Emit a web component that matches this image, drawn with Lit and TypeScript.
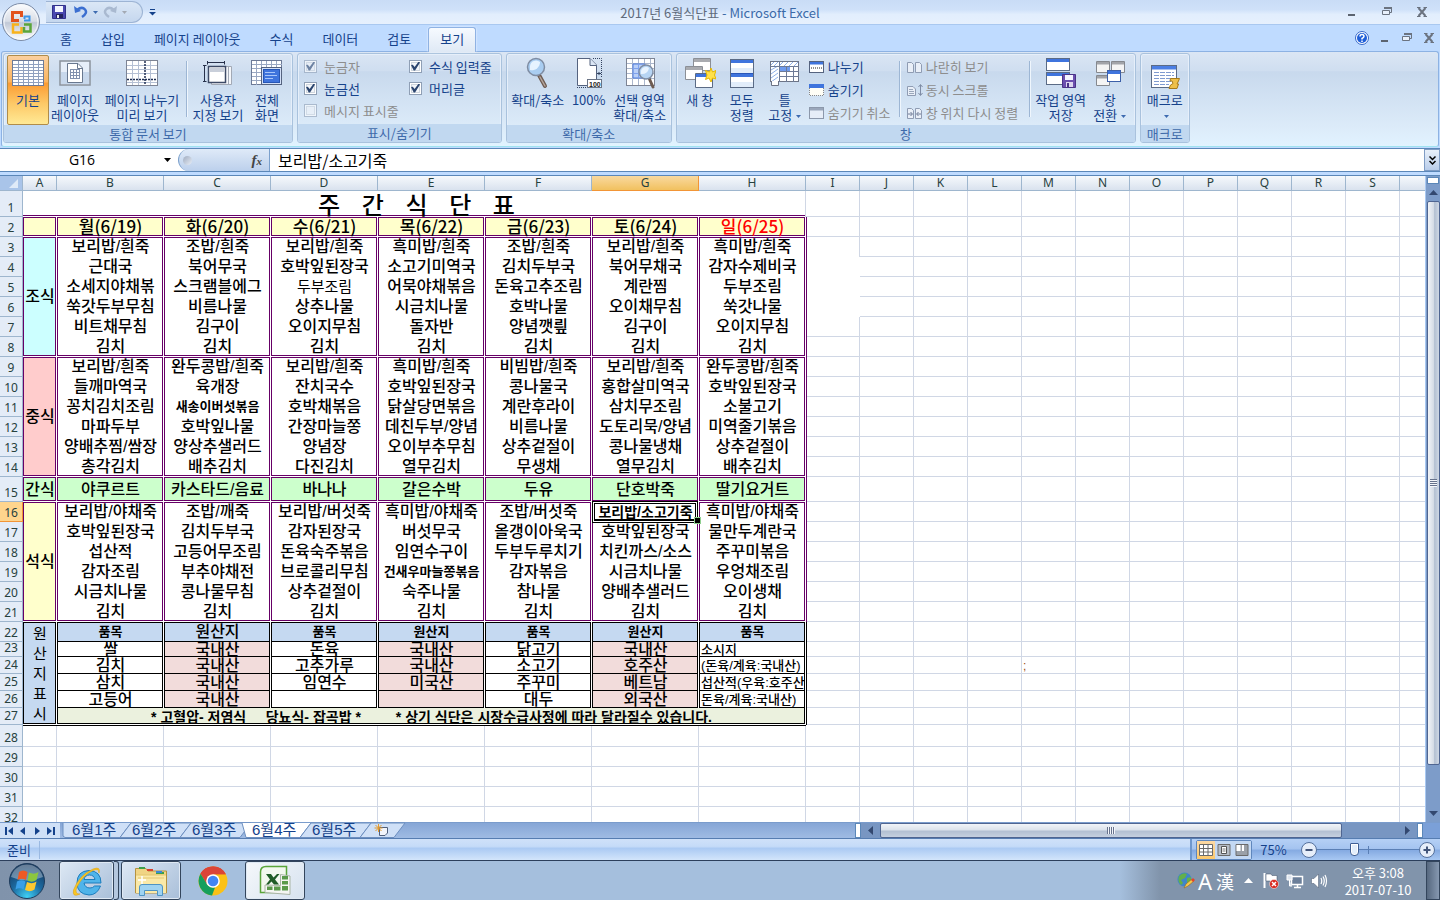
import { LitElement, html, css, nothing } from "lit";
import { customElement } from "lit/decorators.js";
import { classMap } from "lit/directives/class-map.js";

/* ---------- workbook data ---------- */

const COLS = "ABCDEFGHIJKLMNOPQRS".split("");

const BREAKFAST = [
  ["보리밥/흰죽", "조밥/흰죽", "보리밥/흰죽", "흑미밥/흰죽", "조밥/흰죽", "보리밥/흰죽", "흑미밥/흰죽"],
  ["근대국", "북어무국", "호박잎된장국", "소고기미역국", "김치두부국", "북어무채국", "감자수제비국"],
  ["소세지야채볶", "스크램블에그", "두부조림", "어묵야채볶음", "돈육고추조림", "계란찜", "두부조림"],
  ["쑥갓두부무침", "비름나물", "상추나물", "시금치나물", "호박나물", "오이채무침", "쑥갓나물"],
  ["비트채무침", "김구이", "오이지무침", "돌자반", "양념깻릪", "김구이", "오이지무침"],
  ["김치", "김치", "김치", "김치", "김치", "김치", "김치"],
];
const LUNCH = [
  ["보리밥/흰죽", "완두콩밥/흰죽", "보리밥/흰죽", "흑미밥/흰죽", "비빔밥/흰죽", "보리밥/흰죽", "완두콩밥/흰죽"],
  ["들깨마역국", "육개장", "잔치국수", "호박잎된장국", "콩나물국", "홍합살미역국", "호박잎된장국"],
  ["꽁치김치조림", "새송이버섯볶음", "호박채볶음", "닭살당면볶음", "계란후라이", "삼치무조림", "소불고기"],
  ["마파두부", "호박잎나물", "간장마늘쫑", "데친두부/양념", "비름나물", "도토리묵/양념", "미역줄기볶음"],
  ["양배추찜/쌈장", "양상추샐러드", "양념장", "오이부추무침", "상추겉절이", "콩나물냉채", "상추겉절이"],
  ["총각김치", "배추김치", "다진김치", "열무김치", "무생채", "열무김치", "배추김치"],
];
const SNACK = [["야쿠르트", "카스타드/음료", "바나나", "갈은수박", "두유", "단호박죽", "딸기요거트"]];
const DINNER = [
  ["보리밥/야채죽", "조밥/깨죽", "보리밥/버섯죽", "흑미밥/야채죽", "조밥/버섯죽", "보리밥/소고기죽", "흑미밥/야채죽"],
  ["호박잎된장국", "김치두부국", "감자된장국", "버섯무국", "올갱이아욱국", "호박잎된장국", "물만두계란국"],
  ["섭산적", "고등어무조림", "돈육숙주볶음", "임연수구이", "두부두루치기", "치킨까스/소스", "주꾸미볶음"],
  ["감자조림", "부추야채전", "브로콜리무침", "건새우마늘쫑볶음", "감자볶음", "시금치나물", "우엉채조림"],
  ["시금치나물", "콩나물무침", "상추겉절이", "숙주나물", "참나물", "양배추샐러드", "오이생채"],
  ["김치", "김치", "김치", "김치", "김치", "김치", "김치"],
];
const ORIGIN = [
  ["품목", "원산지", "품목", "원산지", "품목", "원산지", "품목"],
  ["쌀", "국내산", "돈육", "국내산", "닭고기", "국내산", "소시지"],
  ["김치", "국내산", "고추가루", "국내산", "소고기", "호주산", "(돈육/계육:국내산)"],
  ["삼치", "국내산", "임연수", "미국산", "주꾸미", "베트남", "섭산적(우육:호주산"],
  ["고등어", "국내산", "", "", "대두", "외국산", "돈육/계육:국내산)"],
];
const DAYS = ["월(6/19)", "화(6/20)", "수(6/21)", "목(6/22)", "금(6/23)", "토(6/24)", "일(6/25)"];
const SMALL = new Set(["새송이버섯볶음", "건새우마늘쫑볶음"]);

type Block = { first: number; label: string; tint: string; rows: string[][] };
const BLOCKS: Block[] = [
  { first: 3, label: "조식", tint: "cyan", rows: BREAKFAST },
  { first: 9, label: "중식", tint: "pink", rows: LUNCH },
  { first: 15, label: "간식", tint: "green", rows: SNACK },
  { first: 16, label: "석식", tint: "yellow", rows: DINNER },
];

/* ---------- icons ---------- */

const icNormal = html`<svg viewBox="0 0 32 32" width="32" height="32">
  <rect x=".5" y="3.5" width="31" height="25" fill="#fff" stroke="#6d7a96"></rect>
  <path d="M6.5 4V28M11.5 4V28M16.5 4V28M21.5 4V28M26.5 4V28M1 7.5H31M1 10.5H31M1 13.5H31M1 16.5H31M1 19.5H31M1 22.5H31M1 25.5H31" stroke="#8fa0bf" fill="none"></path></svg>`;
const icPage = html`<svg viewBox="0 0 32 32" width="32" height="32">
  <rect x="1" y="4" width="30" height="24" fill="#e6eef9" stroke="#8b929c" stroke-width="1.5"></rect>
  <path d="M2 15H30V27H2Z" fill="#c8d8ec"></path>
  <path d="M8.500 6.500H19L23.500 11V25.500H8.500Z" fill="#fff" stroke="#69788f"></path>
  <path d="M18.500 7V11.500H23" fill="none" stroke="#69788f"></path>
  <path d="M11 12.500H21M11 15.500H21M11 18.500H21M11 21.500H21M11.500 12V22M14.500 12V22M17.500 12V22M20.500 12V22" stroke="#8291ad" fill="none"></path></svg>`;
const icBreak = html`<svg viewBox="0 0 32 32" width="32" height="32">
  <rect x=".5" y="3.500" width="31" height="25" fill="#fff" stroke="#7d8494"></rect>
  <path d="M6.500 4V28M12.500 4V28M24.500 4V28M1 8.500H31M1 12.500H31M1 16.500H31M1 25.500H31" stroke="#b5c0d4" fill="none"></path>
  <path d="M1 22.500H31M19 4V28" stroke="#1f2e52" stroke-width="1.500" stroke-dasharray="2 1" fill="none"></path></svg>`;
const icCustom = html`<svg viewBox="0 0 32 32" width="32" height="32">
  <path d="M9.500 9.500H29.500V27.500H9.500Z" fill="#f4f6fa" stroke="#a2a9b5"></path>
  <path d="M26.500 10V27" stroke="#a2a9b5"></path>
  <path d="M6.500 9.500H23.500V25.500H6.500Z" fill="#fff" stroke="#3d4a66" stroke-width="1.500"></path>
  <path d="M8 11H22V15H8Z" fill="#c9cfda"></path>
  <path d="M5 5.500H23M5.500 4V7.500M22.500 4V7.500M2.500 8V25M1 8.500H4.500M1 24.500H4.500" stroke="#26304a" fill="none"></path></svg>`;
const icFull = html`<svg viewBox="0 0 32 32" width="32" height="32">
  <rect x=".5" y="3.500" width="30" height="24" fill="#fff" stroke="#6d7a96"></rect>
  <path d="M5.500 4V28M10.500 4V28M15.500 4V28M20.500 4V28M25.500 4V28M1 7.500H31M1 11.500H31M1 15.500H31M1 19.500H31M1 23.500H31" stroke="#9aa8c2" fill="none"></path>
  <rect x="10.500" y="10.500" width="20" height="17" fill="#d3e0f8" stroke="#55637f"></rect>
  <rect x="12.500" y="12.500" width="16" height="13" fill="#3f74dd" stroke="#2756b5"></rect>
  <path d="M14 15.500H24M14 18.500H26M14 21.500H22" stroke="#a9c6fa"></path></svg>`;
const icZoom = html`<svg viewBox="0 0 32 32" width="32" height="32">
  <path d="M17 18L23 29" stroke="#6e5c52" stroke-width="4" stroke-linecap="round"></path>
  <path d="M18 20L23 29" stroke="#b5a59b" stroke-width="1.500" stroke-linecap="round"></path>
  <circle cx="14" cy="10" r="8.500" fill="#a9cdf1" stroke="#7f8da3" stroke-width="1.500"></circle>
  <path d="M8 9a6 6 0 0 1 10-4a8 8 0 0 1-10 8z" fill="#e6f3ff"></path></svg>`;
const ic100 = html`<svg viewBox="0 0 32 32" width="32" height="32">
  <path d="M20 1.500H28.500V20M4 30.500H16" stroke="#33425f" stroke-dasharray="1 1" fill="none"></path>
  <path d="M4.500 1.500H17L23.500 8V28.500H4.500Z" fill="#fff" stroke="#55637f"></path>
  <path d="M17 1.500V8.500H23.500" fill="#dbe6f5" stroke="#55637f"></path>
  <path d="M24 16.500H28M26 15V18" stroke="#33425f"></path>
  <rect x="14.500" y="22.500" width="14" height="8" fill="#fff" stroke="#6a7486"></rect>
  <text x="16" y="29.500" font-size="7" font-weight="700" font-family="Liberation Sans, sans-serif" fill="#222">100</text></svg>`;
const icZoomSel = html`<svg viewBox="0 0 32 32" width="32" height="32">
  <rect x="2.500" y="1.500" width="28" height="27" fill="#fff" stroke="#7d8494"></rect>
  <path d="M8.500 2V28M14.500 2V28M20.500 2V28M26.500 2V28M3 6.500H30M3 11.500H30M3 16.500H30M3 21.500H30" stroke="#aab6cc" fill="none"></path>
  <path d="M9 7H21V21H9Z" fill="#b9cff7" stroke="#4f7ce0"></path>
  <path d="M14.500 7V21M9 11.500H21M9 16.500H21" stroke="#7fa2ee"></path>
  <path d="M25 21L29 30" stroke="#6e5c52" stroke-width="3" stroke-linecap="round"></path>
  <circle cx="22" cy="15" r="7" fill="#b7d5f4" stroke="#7f8da3" stroke-width="1.500"></circle>
  <path d="M17 14a5 5 0 0 1 8-3a7 7 0 0 1-8 6z" fill="#e9f4ff"></path></svg>`;
const icNewWin = html`<svg viewBox="0 0 32 32" width="32" height="32">
  <path d="M9.500 1.500H26.500V13.500H9.500Z" fill="#fff" stroke="#8b8f96"></path><path d="M10 2H26V5H10Z" fill="#a9abb0"></path>
  <path d="M1.500 9.500H18.500V22.500H1.500Z" fill="#fff" stroke="#8b8f96"></path><path d="M2 10H18V13H2Z" fill="#a9abb0"></path>
  <path d="M11.500 16.500H28.500V30.500H11.500Z" fill="#fff" stroke="#5b6b85"></path><path d="M12 17H28V20H12Z" fill="#3f74dd"></path>
  <path d="M27 11L28.500 15L32 13.500L30.500 18L32 22L28.500 21L27 25L25 21L21.500 22.500L23 18L21.500 13.500L25.500 15Z" fill="#ffe14a" stroke="#e6b800"></path></svg>`;
const icArrange = html`<svg viewBox="0 0 32 32" width="32" height="32">
  <rect x="4.500" y="2.500" width="23" height="28" fill="#fff" stroke="#5b6b85"></rect>
  <path d="M5 3H27V6H5ZM5 17H27V20H5Z" fill="#3f74dd"></path><path d="M5 16.500H27" stroke="#2a57b8"></path>
  <path d="M5 11H27V16H5ZM5 25H27V30H5Z" fill="#e2edfa"></path></svg>`;
const icFreeze = html`<svg viewBox="0 0 32 32" width="32" height="32">
  <rect x="1.500" y="4.500" width="28" height="20" fill="#fff" stroke="#6d7486"></rect>
  <path d="M2 8L5 5M5 9L9 5M10 9L14 5M15 9L19 5M20 9L24 5M25 9L29 5M2 13L9 9M2 17L9 12M2 21L9 16M2 25L9 20" stroke="#8fb0e8"></path>
  <path d="M1 9.500H30M10.500 4V25M10 14.500H30M10 19.500H30M17.500 9V25M24.500 9V25" stroke="#6d7a96"></path>
  <path d="M11 10H17V14H11ZM18 10H21V14H18Z" fill="#6e9bef"></path>
  <path d="M2.500 24V28.500H9.500V24" fill="#fff" stroke="#6d7486"></path></svg>`;
const icSaveWs = html`<svg viewBox="0 0 32 32" width="32" height="32">
  <rect x="1.500" y="1.500" width="23" height="12" fill="#fff" stroke="#5b6b85"></rect><path d="M2 2H24V5H2Z" fill="#3f74dd"></path>
  <rect x="1.500" y="15.500" width="23" height="12" fill="#fff" stroke="#5b6b85"></rect><path d="M2 16H24V19H2Z" fill="#3f74dd"></path>
  <path d="M17.500 17.500H30.500V30.500H17.500Z" fill="#6c4fae" stroke="#4a3388"></path>
  <path d="M20 18H28V23H20Z" fill="#f4f4ff"></path><path d="M21 25H28V30H21Z" fill="#ddd6ef"></path><path d="M22 26H24V30H22Z" fill="#4a3388"></path></svg>`;
const icSwitch = html`<svg viewBox="0 0 32 32" width="32" height="32">
  <path d="M2.500 4.500H15.500V15.500H2.500ZM17.500 4.500H30.500V15.500H17.500ZM2.500 18.500H15.500V28.500H2.500Z" fill="#f4f4f4" stroke="#85888e"></path>
  <path d="M3 5H15V7.500H3ZM18 5H30V7.500H18ZM3 19H15V21.500H3Z" fill="#a2a4a9"></path>
  <rect x="13.500" y="13.500" width="13" height="11" fill="#fff" stroke="#3c5fa8"></rect><path d="M14 14H26V17H14Z" fill="#3f74dd"></path></svg>`;
const icMacro = html`<svg viewBox="0 0 32 32" width="32" height="32">
  <rect x="2.500" y="8.500" width="25" height="22" fill="#fff" stroke="#5b6b85"></rect><path d="M3 9H27V12.500H3Z" fill="#4b7fe4"></path>
  <path d="M5 15.500H25M5 18.500H25M5 21.500H25M5 24.500H25M5 27.500H20" stroke="#7f9bd0" stroke-dasharray="5 1"></path>
  <path d="M21.500 21.500H30.500L29 25L28 27H29.500L28 31.500H20L21.500 28L24 26.500L23 24H21Z" fill="#eec04a" stroke="#a67a18"></path></svg>`;

const icSplit = html`<svg viewBox="0 0 16 14" width="16" height="14"><rect x=".5" y="1.500" width="14" height="11" fill="#fff" stroke="#55637f"></rect><path d="M1 2H14V4.500H1Z" fill="#3f74dd"></path><path d="M2 8H14" stroke="#222" stroke-dasharray="1 1"></path></svg>`;
const icHide = html`<svg viewBox="0 0 16 14" width="16" height="14"><path d="M.5 5V12.500H14.500V5" fill="#fffef6" stroke="#888" stroke-dasharray="1 1"></path><path d="M0 1H15V5H0Z" fill="#3f74dd"></path></svg>`;
const icUnhide = html`<svg viewBox="0 0 16 14" width="16" height="14"><rect x=".5" y="1.500" width="14" height="11" fill="#e6edf7" stroke="#8c98ab"></rect><path d="M1 2H14V4.500H1Z" fill="#9aa7bb"></path></svg>`;
const icSide = html`<svg viewBox="0 0 16 14" width="16" height="14"><path d="M.5 2.500H4.500L6.500 4.500V12.500H.5ZM8.500 2.500H12.500L14.500 4.500V12.500H8.500Z" fill="#e9eff8" stroke="#8f9cb3"></path></svg>`;
const icSync = html`<svg viewBox="0 0 16 14" width="16" height="14"><path d="M.5 3.500H6L8.500 6V12.500H.5Z" fill="#e9eff8" stroke="#8f9cb3"></path><path d="M2 6.500H6M2 8.500H7M2 10.500H7" stroke="#9aa7bb"></path><path d="M13.500 2V12M11.500 4L13.500 1.500L15.500 4M11.500 10L13.500 12.500L15.500 10" fill="none" stroke="#7f8ca5"></path></svg>`;
const icReset = html`<svg viewBox="0 0 16 14" width="16" height="14"><path d="M.5 2.500H4.500L6.500 4.500V12.500H.5ZM8.500 2.500H12.500L14.500 4.500V12.500H8.500Z" fill="#e9eff8" stroke="#8f9cb3"></path><path d="M1 8H5M3.500 6L5.500 8L3.500 10M14 8H10M11.500 6L9.500 8L11.500 10" fill="none" stroke="#6f7d98"></path></svg>`;

const icMin = html`<svg viewBox="0 0 12 12" width="12" height="12"><path d="M2 8H9V10H2Z" fill="#5c6470"></path></svg>`;
const icRestore = html`<svg viewBox="0 0 12 12" width="12" height="12"><path d="M3.500 3V1.500H10.500V6.500H9" fill="none" stroke="#6b7380"></path><path d="M3 1H11V3H3Z" fill="#6b7380"></path><path d="M1.500 4.500H8.500V8.500H1.500Z" fill="#e8f0fb" stroke="#6b7380"></path></svg>`;
const icClose = html`<svg viewBox="0 0 12 12" width="12" height="12"><path d="M2.500 2L9.500 10M9.500 2L2.500 10" stroke="#6b7380" stroke-width="2"></path><path d="M1 1.500H4.500M7.500 1.500H11M1 10.500H4.500M7.500 10.500H11" stroke="#6b7380"></path></svg>`;
const icHelp = html`<svg viewBox="0 0 14 14" width="14" height="14"><circle cx="7" cy="7" r="6.500" fill="#fff" stroke="#3567c8"></circle><circle cx="7" cy="7" r="5" fill="#1f5fd8"></circle><path d="M5 5.500Q5 3.500 7 3.500T9 5.300Q9 6.500 7 7.500V8.500M7 9.500V11" stroke="#fff" stroke-width="1.500" fill="none"></path></svg>`;
const caret = html`<svg class="caret" viewBox="0 0 5 3" width="5" height="3"><path d="M0 0H5L2.500 3Z" fill="#3d6bb0"></path></svg>`;
const caretOff = html`<svg class="caret" viewBox="0 0 5 3" width="5" height="3"><path d="M0 0H5L2.500 3Z" fill="#a3a9b3"></path></svg>`;

const officeOrb = html`<svg viewBox="0 0 40 40" width="40" height="40">
  <defs><linearGradient id="orb" x1="0" y1="0" x2="0" y2="1"><stop offset="0" stop-color="#fdfdfe"></stop><stop offset=".48" stop-color="#d8dde6"></stop><stop offset=".52" stop-color="#c0c8d6"></stop><stop offset="1" stop-color="#fff"></stop></linearGradient></defs>
  <circle cx="20" cy="20" r="18.500" fill="url(#orb)" stroke="#7b8ba6"></circle>
  <circle cx="20" cy="20" r="17" fill="none" stroke="#f6f9fd"></circle>
  <g fill="none" stroke-width="3">
    <path d="M18 18.500H11.500V10.500H20.500V15" stroke="#e2521c"></path>
    <path d="M23 18.500H28.500V14.500H23.500V17" stroke="#3a94e8" stroke-width="2"></path>
    <path d="M18 22.500H12V30.500H20.500V25" stroke="#f8b21c" stroke-width="2.500"></path>
    <path d="M23 22.500H29.500V29.500H23V25" stroke="#5ba53a" stroke-width="2.500"></path></g></svg>`;

const icSave = html`<svg viewBox="0 0 14 14" width="14" height="14"><path d="M.5.5H13.500V13.500H.5Z" fill="#4a48b0" stroke="#31318a"></path><path d="M3 1H11V7H3Z" fill="#f3f5ff"></path><path d="M4 9H11V13H4Z" fill="#23235e"></path><path d="M5 10H7V13H5Z" fill="#eee"></path></svg>`;
const icUndo = html`<svg viewBox="0 0 14 14" width="14" height="14"><path d="M3 5Q8 1 11 4.500T8 12" fill="none" stroke="#3c6fd0" stroke-width="2.500"></path><path d="M0 1L1 8L7 6Z" fill="#3c6fd0"></path></svg>`;
const icRedo = html`<svg viewBox="0 0 14 14" width="14" height="14"><path d="M11 5Q6 1 3 4.500T6 12" fill="none" stroke="#a9b9d0" stroke-width="2.500"></path><path d="M14 1L13 8L7 6Z" fill="#a9b9d0"></path></svg>`;

const navIcon = (d: string) => html`<svg viewBox="0 0 10 10" width="10" height="10"><path d=${d} fill="#15428b"></path></svg>`;

/* taskbar pictures */
const winOrb = html`<svg viewBox="0 0 38 38" width="38" height="38">
  <defs><radialGradient id="wo" cx=".5" cy=".95" r=".9"><stop offset="0" stop-color="#3fd0f5"></stop><stop offset=".5" stop-color="#1c6aa0"></stop><stop offset="1" stop-color="#163a61"></stop></radialGradient></defs>
  <circle cx="19" cy="19" r="17.500" fill="url(#wo)" stroke="#1f3c5c"></circle>
  <path d="M3 15A16.500 16.500 0 0 1 35 15Q19 22 3 15Z" fill="#fff" opacity=".35"></path>
  <path d="M11 10Q15 7 19.500 10L18 18Q13.500 15.500 9.500 18Z" fill="#ee5a24"></path>
  <path d="M21 10.500Q26 13 30.500 10L28.500 18Q24 21 19.500 18.500Z" fill="#8cc63e"></path>
  <path d="M9 19.500Q13.500 17 17.500 19.500L15.500 27.500Q11.500 25 7.500 27.500Z" fill="#3a9fe8"></path>
  <path d="M19 20Q24 22.500 28.500 19.500L26.500 27.500Q22 30.500 17 28Z" fill="#fdc82f"></path></svg>`;
const ieIcon = html`<svg viewBox="0 0 32 32" width="32" height="32">
  <path d="M30 18H13Q14 23 19 23Q22 23 23.500 21H29.500Q26 30 18 30Q6 29 6 18Q6 6 18 5.500Q30 6 30 18ZM13 14.500H24Q23 10 18.500 10Q14 10 13 14.500Z" fill="#4fb4ea" stroke="#1c7dbd"></path>
  <path d="M28 8Q30 1 22 4Q8 10 2.500 25Q1 33 9 29Q3 29 6 22Q12 10 22 5.500Q28 3 28 8Z" fill="#f9c623" stroke="#d99a10" stroke-width=".5"></path></svg>`;
const folderIcon = html`<svg viewBox="0 0 34 32" width="34" height="32">
  <path d="M1.500 3.500H12L14 6H32.500V28H1.500Z" fill="#f0d484" stroke="#b59240"></path>
  <path d="M5 2H11V4H5ZM22 7H30V9H22Z" fill="#3aa04a"></path><path d="M13 4H19V6H13Z" fill="#d8402c"></path><path d="M22 6H28V8H22Z" fill="#3a87d6"></path>
  <path d="M2 10H32V28H2Z" fill="#fae9a8"></path><path d="M2 10H32M4 13H30" stroke="#e3c670"></path>
  <path d="M5.500 30.500V22Q5.500 19.500 8 19.500H26Q28.500 19.500 28.500 22V30.500H23.500V25.500H10.500V30.500Z" fill="#9fd3f2" stroke="#4f94c4"></path>
  <path d="M8 11V19M4 15H12" stroke="#fff" stroke-width="1.500"></path></svg>`;
const chromeIcon = html`<svg viewBox="0 0 30 30" width="30" height="30">
  <circle cx="15" cy="15" r="14.500" fill="#fbc116"></circle>
  <path d="M15 15L2.500 7.500A14.500 14.500 0 0 1 27.800 8.200H15Z" fill="#db4437"></path>
  <path d="M15 8.200H27.800A14.500 14.500 0 0 0 2.500 7.800L9 18.500Z" fill="#db4437"></path>
  <path d="M2.500 7.800L9.200 18.600Q12 22 17 21.500L14 29.500A14.500 14.500 0 0 1 2.500 7.800Z" fill="#159f5c"></path>
  <circle cx="15" cy="15" r="6.800" fill="#fff"></circle><circle cx="15" cy="15" r="5.300" fill="#4285f4"></circle></svg>`;
const excelIcon = html`<svg viewBox="0 0 32 32" width="32" height="32">
  <path d="M7 1.500H27.500V22Q27.500 27.500 21 27.500H1.500V7Q1.500 1.500 7 1.500Z" fill="#f2f8ee" stroke="#5aa53a" stroke-width="1.500"></path>
  <path d="M21.500 9.500L31 11V29.500L6 27.500V20L21.500 20.500Z" fill="#f4f6f2" stroke="#aab5a5"></path>
  <path d="M23 11H29V14.500H23ZM23 16H29V19.500H23ZM23 21H29V25.500H23ZM15 21.500H21.500V25.500H15ZM8 21.500H13.500V25H8Z" fill="#5a9a4a"></path>
  <path d="M7 9H12L14.500 12.500L18 9H20.500L16 14.500L20 19.500H15L12.500 16.500L9.500 19.500H7L11 14.500Z" fill="#1f5c26"></path></svg>`;
const trayGlobe = html`<svg viewBox="0 0 18 18" width="18" height="18"><circle cx="7.500" cy="7.500" r="7" fill="#3f86c9"></circle><path d="M2 4Q6 0 10 2L8 6L4 8L6 11L4 13Q0 9 2 4ZM10 6L14 5L14 9L10 11Z" fill="#63b04a"></path><path d="M7 16L9 12L15 7L17 9L11 14Z" fill="#f6c84a" stroke="#8b5a18" stroke-width=".5"></path><path d="M14 8L16 6L18 8L16 10Z" fill="#e0452e"></path></svg>`;
const trayFlag = html`<svg viewBox="0 0 18 18" width="18" height="18"><path d="M2.500 1V16" stroke="#fff" stroke-width="2"></path><path d="M4 2H9L10 3.500H15V10H9L8 9H4Z" fill="#fff" stroke="#3f4f66" stroke-width=".5"></path><circle cx="12" cy="12" r="4.500" fill="#d8281e" stroke="#fff" stroke-width=".5"></circle><path d="M10 10L14 14M14 10L10 14" stroke="#fff" stroke-width="1.500"></path></svg>`;
const trayNet = html`<svg viewBox="0 0 18 18" width="18" height="18"><path d="M5.500 4.500H16.500V12.500H5.500Z" fill="#6b7f9a" stroke="#fff" stroke-width="1.500"></path><path d="M8 15.500H15M11.500 13V15" stroke="#fff" stroke-width="1.500"></path><path d="M1 3H6V8H1ZM3.500 8V14H6" fill="#dfe6ef" stroke="#fff"></path></svg>`;
const traySound = html`<svg viewBox="0 0 18 18" width="18" height="18"><path d="M1.500 6.500H4L8.500 2V16L4 11.500H1.500Z" fill="#fff" stroke="#4c5b70" stroke-width=".5"></path><path d="M11 6Q12.500 9 11 12M13 4.500Q15.500 9 13 13.500M15 3Q18 9 15 15" fill="none" stroke="#fff" stroke-width="1.200"></path></svg>`;

/* ---------- component ---------- */

@customElement("app-root")
export class AppRoot extends LitElement {
  static styles = css`
    :host {
      display: flex;
      flex-direction: column;
      height: 100vh;
      overflow: hidden;
      background: #bfdbff;
      color: #15428b;
      font: 13px/15px "Noto Sans CJK KR", "Open Sans", sans-serif;
      cursor: default;
    }
    * { box-sizing: border-box; }
    button, input { font: inherit; color: inherit; }
    button { background: none; border: 0; padding: 0; margin: 0; }
    svg { display: block; flex: none; }
    .grow { flex: 1; }

    /* title bar */
    .title { position: relative; height: 25px; display: flex; align-items: center; padding: 0 12px 0 46px;
      background: linear-gradient(#c9dcf6, #cfe1f9 40%, #e2eefd 60%, #e6f0fd); border-bottom: 1px solid #a9c8f0; }
    .orb { position: absolute; left: 1px; top: 2px; z-index: 3; }
    .qat { display: flex; align-items: center; height: 22px; width: 97px; padding-left: 6px; gap: 5px;
      border: 1px solid #9db4d4; border-left: 0; border-radius: 0 11px 11px 0; background: linear-gradient(#dbe7f6, #c5d7ee); }
    .qat .caret { margin-left: 0; }
    .qat .u { margin-left: 3px; }
    .more { margin-left: 6px; }
    .doc { position: absolute; left: 0; right: 0; text-align: center; pointer-events: none; color: #3b6aa8; }
    .doc span { color: #606b7c; }
    .wbtns { display: flex; gap: 23px; }

    /* ribbon tabs */
    .tabs { height: 26px; display: flex; align-items: flex-end; gap: 7px; padding: 0 5px 0 49px; }
    .tab { height: 24px; padding: 0 11px 2px; border: 1px solid transparent; border-bottom: 0; border-radius: 3px 3px 0 0; margin: 0 -1px; }
    .tab.on { background: linear-gradient(#f6faff, #dfe9f5); border-color: #8fb2e3; box-shadow: 0 0 2px #fff; margin-bottom: -1px; height: 25px; padding-bottom: 3px; z-index: 1; }
    .mdi { display: flex; align-items: center; height: 26px; gap: 10px; }

    /* ribbon */
    .ribbon { margin: 0 1px; height: 96px; display: flex; gap: 4px; padding: 1px 1px 3px; border: 1px solid #8db2e3; border-radius: 3px;
      background: linear-gradient(#dbe6f4, #cfdef0 20%, #c8d9ed 21%, #dcebf9 80%, #e1f3ff); border-bottom-color: #9ee3f0; }
    .group { display: flex; flex-direction: column; border: 1px solid #a9c2dd; border-radius: 3px; overflow: hidden;
      box-shadow: inset 0 0 0 1px #e6effa; }
    .gbody { flex: 1; display: flex; padding: 1px 3px 0; }
    .glabel { height: 18px; line-height: 17px; text-align: center; background: #c1d8f0; color: #3e6aaa; }
    .big { display: flex; flex-direction: column; align-items: center; height: 70px; padding-top: 1px; border: 1px solid transparent; white-space: nowrap; }
    .big .txt { margin-top: 3px; line-height: 15px; display: block; text-align: center; }
    .big.on { border-color: #b08c4a; border-radius: 2px; background: linear-gradient(#fbd0a0, #fbb45e 38%, #fb9b33 40%, #fdc967 70%, #ffe995); }
    .w40 { width: 40px; } .w42 { width: 42px; } .w44 { width: 44px; } .w46 { width: 46px; } .w52 { width: 52px; } .w54 { width: 54px; } .w56 { width: 56px; } .w82 { width: 82px; }
    .caret { display: inline-block; vertical-align: middle; margin-left: 4px; }
    .sep { width: 2px; margin: 6px 3px 8px; border-left: 1px solid #9db6d4; border-right: 1px solid #eff6fd; }
    .checks { display: grid; grid-template-columns: 105px auto; grid-auto-rows: 22px; align-items: center; padding: 0 6px 0 3px; height: 66px; }
    .checks label { display: flex; align-items: center; gap: 7px; white-space: nowrap; }
    .checks input { appearance: none; margin: 0; width: 13px; height: 13px; border: 1px solid #8f9fb5; background: #f3f6fa; box-shadow: inset 0 0 0 1px #fff, inset 0 0 0 2px #cfd6de; }
    .checks input:checked::after { content: ""; display: block; width: 9px; height: 9px; margin: 1px; background: #2b456f;
      clip-path: polygon(0 40%, 20% 35%, 40% 60%, 85% 0, 100% 10%, 45% 100%, 30% 100%); }
    .off { color: #8d8d8d; }
    .checks .off input { opacity: .6; }
    .smalls { display: flex; flex-direction: column; padding: 0 3px; }
    .smalls button { display: flex; align-items: center; gap: 3px; height: 23px; white-space: nowrap; }
    .s1 { width: 90px; } .s2 { width: 122px; }

    /* formula bar */
    .fbar { height: 24px; margin-top: 1px; display: flex; border: 1px solid #5b87b8; border-width: 1px 0; background: #fff; color: #000; }
    .name { width: 178px; display: flex; align-items: center; padding-right: 7px; }
    .name input { flex: 1; min-width: 0; border: 0; outline: 0; background: none; text-align: center; font: 14px/20px "Open Sans", "Noto Sans CJK KR", sans-serif; padding: 0; }
    .fx { width: 92px; display: flex; align-items: center; justify-content: space-between; padding: 0 7px 0 4px; border: 1px solid #7ba0cc; border-width: 0 1px; border-radius: 11px 0 0 11px;
      background: linear-gradient(#dfeaf8, #bcd0ec); }
    .fx i { width: 9px; height: 9px; border-radius: 5px; background: linear-gradient(135deg, #9fabbf, #e8eef7); }
    .fx button { font: italic 700 15px/20px "Liberation Serif", serif; color: #444; }
    .fx small { font-size: 11px; }
    .formula { flex: 1; border: 0; outline: 0; padding: 0 8px; font-size: 16px; line-height: 20px; height: 22px; min-width: 0; }
    .expand { width: 16px; border: 1px solid #7f9cc4; background: linear-gradient(#e8f0fa, #b9cdea); display: grid; place-items: center; }

    /* sheet */
    .sheetarea { flex: 1; min-height: 0; display: flex; margin-top: 3px; border-top: 1px solid #5b87b8; background: #fff; }
    .sheet { flex: 1; min-width: 0; overflow: hidden; }
    table { border-collapse: separate; border-spacing: 0; table-layout: fixed; width: 1454px; color: #000;
      font: 500 16px/14px "Liberation Sans", "Noto Sans CJK KR", sans-serif; }
    th, td { padding: 0; white-space: nowrap; }
    thead th { height: 15px; font: 12px/14px "Noto Sans", sans-serif; color: #27413e; border-right: 1px solid #9eb6ce; border-bottom: 1px solid #9eb6ce; background: linear-gradient(#f6f9fc, #d9e2ee); }
    thead th.on { background: linear-gradient(#f9d99f, #f1c15f); border-color: #f29536; }
    thead th.corner { background: #a9c4e9; }
    tbody th.n { font: 12px/12px "Noto Sans", sans-serif; color: #27413e; vertical-align: bottom; padding-bottom: 2px; background: #e4ecf7; border-right: 1px solid #9eb6ce; border-bottom: 1px solid #9eb6ce; }
    tbody th.n.on { background: #ffd58d; border-color: #f29536; }
    .cr { width: 23px; } .ca { width: 34px; } .cm { width: 107px; } .cx { width: 54px; }
    .h26 { height: 26px; } .h25 { height: 25px; } .h22 { height: 22px; } .h20 { height: 20px; } .h17 { height: 17px; } .h15 { height: 15px; }
    .g { --right: #d0d7e5; --bottom: #d0d7e5; --left: transparent; --above: transparent; font-weight: 400; font-size: 12px;
      box-shadow: inset 1px 0 0 var(--left), inset 0 1px 0 var(--above), inset -1px 0 0 var(--right), inset 0 -1px 0 var(--bottom); }
    .g.nob { --bottom: #fff; } .g.nor { --right: #fff; }
    .g.edge { --left: #606; }
    .g.edge.blk { --left: #000; }
    .g.under { --above: #000; }
    .ttl { text-align: center; white-space: pre; font: 500 24px/24px "Noto Sans CJK KR", sans-serif; padding-left: 4px;
      box-shadow: inset -1px 0 0 #d0d7e5, inset 0 -1px 0 #fff, inset 0 -2px 0 #606; }
    .c { --k: #606; --t: 0px; --b: 0px; text-align: center; vertical-align: middle;
      box-shadow: inset -1px calc(0px - var(--b)) 0 #fff, inset 1px var(--t) 0 var(--k), inset -2px calc(-2 * var(--b)) 0 var(--k); }
    .top { --t: 1px; } .bot { --b: 1px; } .blk { --k: #000; }
    .c.under1 { box-shadow: inset -1px 0 0 #fff, inset 0 -1px 0 #000, inset 1px var(--t) 0 #000, inset -2px 0 0 #000; }
    .day { font: 500 17px/14px "Noto Sans CJK KR", sans-serif; padding-bottom: 3px; background: #ffc; } .red { color: #f00; }
    .cyan { background: #cff; } .pink { background: #fcc; } .green { background: #cfc; } .yellow { background: #ffc; }
    .blue { background: #c5d9f1; } .rose { background: #f2dcdb; } .olive { background: #ebf1de; }
    .sm { font-size: 13px; font-weight: 700; }
    .thin { font-weight: 400; font-size: 15px; }
    .vert { font-size: 15px; line-height: 20px; font-weight: 400; white-space: normal; padding: 0 8px; }
    .left { text-align: left; font-size: 13px; padding-left: 2px; overflow: hidden; }
    .note { font-size: 14px; font-weight: 700; white-space: pre; }
    .sel { position: relative; font-size: 14px; font-weight: 700; }
    .sel::before { content: ""; position: absolute; inset: -1px 1px -1px 0; border: 1px solid #000; box-shadow: inset 0 0 0 1px #fff, inset 0 0 0 2px #000, inset 0 -3px 0 #000; }
    .sel::after { content: ""; position: absolute; right: -2px; bottom: -2px; width: 5px; height: 5px; background: #000; border: 1px solid #8fd08f; }
    .semi { color: #a04a10; padding-left: 1px; }

    /* scrollbars */
    .vbar { width: 15px; background: #7d9cc9; display: flex; flex-direction: column; align-items: center; border-left: 1px solid #a9c9f2; }
    .vsplit { width: 12px; height: 7px; margin-top: 1px; border: 1px solid #5b87b8; background: #fff; }
    .arrow { height: 17px; display: grid; place-items: center; }
    .vthumb { width: 13px; flex: 565; border: 1px solid #4f6591; border-radius: 2px; background: linear-gradient(90deg, #f1f4f8, #d5dce6 50%, #b3c0d2 60%, #cfd8e5); display: grid; place-items: center; }
    .grip { width: 7px; height: 8px; background: repeating-linear-gradient(#66728c 0 1px, #f4f6fa 1px 2px); }
    .vrest { flex: 40; }

    .bottom { height: 16px; display: flex; align-items: stretch; background: linear-gradient(#86a6d6, #9fbbe3); border-top: 1px solid #7a9ccc; }
    .nav { width: 60px; display: flex; align-items: center; justify-content: space-around; background: #cfe0f7; padding: 0 2px; }
    .stab { position: relative; width: 60px; height: 15px; padding: 0 0 2px 12px; text-align: left; white-space: nowrap;
      font: 15px/13px "Liberation Sans", "Noto Sans CJK KR", sans-serif; }
    .stab svg { position: absolute; left: 0; top: 0; overflow: visible; }
    .stab span { position: relative; }
    .stab.add svg.pic { left: 14px; top: 1px; }
    .hwrap { width: 585px; display: flex; align-items: stretch; background: #7896c2; }
    .hsplit { width: 6px; border: 1px solid #5b87b8; background: #fff; }
    .hthumb { flex: 463; border: 1px solid #4f6591; border-radius: 2px; background: linear-gradient(#f1f4f8, #dbe2eb 45%, #b3c0d2 55%, #c5d0df); display: grid; place-items: center; }
    .hgrip { width: 8px; height: 7px; background: repeating-linear-gradient(90deg, #66728c 0 1px, #f4f6fa 1px 2px); }
    .hrest { flex: 56; }
    .harrow { width: 19px; display: grid; place-items: center; }
    .hend { width: 17px; background: #7ba0d8; }

    .status { height: 23px; display: flex; align-items: center; border-top: 1px solid #567db1; border-bottom: 1px solid #2c3f5c;
      background: linear-gradient(#cfe1f9, #c5dbf8 35%, #abcaf3 45%, #d3e5fb); }
    .ready { padding: 0 7px; width: 40px; border-right: 1px solid #9ab9e2; line-height: 18px; white-space: nowrap; }
    .sright { align-self: stretch; display: flex; align-items: center; padding: 0 5px 0 4px; border-left: 2px solid #6f97cd; background: linear-gradient(#b5d0f5, #a5c4f0 45%, #86abe2 55%, #a8c8f3); }
    .views { display: flex; border: 1px solid #5f87bd; border-radius: 2px; }
    .views button { width: 18px; height: 18px; display: grid; place-items: center; background: #c3d8f3; }
    .views .on { background: linear-gradient(#fcd9a5, #fdc96c); }
    .pct { width: 49px; padding-right: 6px; text-align: center; }
    .zoomer { position: relative; width: 102px; height: 20px; }
    .zoomer input { appearance: none; margin: 0; width: 100%; height: 20px; background: linear-gradient(#5a7fb5, #5a7fb5) 0 50% / 100% 1px no-repeat, linear-gradient(#5a7fb5, #5a7fb5) 50% 50% / 1px 8px no-repeat; display: block; }
    .zoomer input::-webkit-slider-thumb { appearance: none; width: 9px; height: 13px; background: #e3eefb; border: 1px solid #3f5f95; border-radius: 1px 1px 4px 4px; box-shadow: inset 0 0 0 1px #fff; }

    /* taskbar */
    .task { height: 39px; display: flex; align-items: stretch; background: linear-gradient(90deg, #8093ab, #8395ad 60px, #a5bfdd 61px, #a5bfdd 1120px, #8194ab 1160px); color: #fff; }
    .start { width: 59px; display: grid; place-items: center; padding-right: 5px; }
    .tb { width: 60px; margin-right: 2px; display: grid; place-items: center; border: 1px solid transparent; border-radius: 3px; }
    .tb.run { border-color: #33455c; background: linear-gradient(135deg, #dde8f4, #a9bfd9); box-shadow: inset 0 0 0 1px #dfe9f4; }
    .tb.act { background: linear-gradient(135deg, #f5f8fb, #d6e2ef); }
    .tb.ie { width: 55px; margin-right: 0; }
    .stack { width: 5px; margin-right: 2px; border: 1px solid #33455c; border-left: 0; border-radius: 0 3px 3px 0; background: #b4c7de; }
    .tray { display: flex; align-items: center; }
    .ime { font: 22px/30px "Noto Sans", sans-serif; margin-left: 3px; }
    .han { font-size: 18px; line-height: 26px; margin: 0 10px 0 4px; }
    .tray .ic { margin-left: 6px; }
    .clock { width: 94px; text-align: center; line-height: 17px; margin-left: 3px; }
    .peek { width: 14px; margin-left: 1px; border: 1px solid #33455c; background: linear-gradient(90deg, #56687f, #8698b0); }
  `;

  private big(icon: unknown, lines: unknown, cls: string) {
    return html`<button class="big ${cls}">${icon}<span class="txt">${lines}</span></button>`;
  }

  private check(text: string, checked: boolean, off = false) {
    return html`<label class=${off ? "off" : ""}><input type="checkbox" .checked=${checked} ?disabled=${off} />${text}</label>`;
  }

  private renderRibbon() {
    const br = html`<br />`;
    return html`
      <section class="ribbon">
        <div class="group">
          <div class="gbody">
            ${this.big(icNormal, "기본", "w42 on")}
            ${this.big(icPage, html`페이지${br}레이아웃`, "w52")}
            ${this.big(icBreak, html`페이지 나누기${br}미리 보기`, "w82")}
            <div class="sep"></div>
            ${this.big(icCustom, html`사용자${br}지정 보기`, "w54")}
            ${this.big(icFull, html`전체${br}화면`, "w44")}
          </div>
          <div class="glabel">통합 문서 보기</div>
        </div>
        <div class="group">
          <div class="gbody">
            <div class="checks">
              ${this.check("눈금자", true, true)} ${this.check("수식 입력줄", true)}
              ${this.check("눈금선", true)} ${this.check("머리글", true)}
              ${this.check("메시지 표시줄", false, true)}
            </div>
          </div>
          <div class="glabel">표시/숨기기</div>
        </div>
        <div class="group">
          <div class="gbody">
            ${this.big(icZoom, "확대/축소", "w56")} ${this.big(ic100, "100%", "w46")}
            ${this.big(icZoomSel, html`선택 영역${br}확대/축소`, "w56")}
          </div>
          <div class="glabel">확대/축소</div>
        </div>
        <div class="group">
          <div class="gbody">
            ${this.big(icNewWin, "새 창", "w40")} ${this.big(icArrange, html`모두${br}정렬`, "w44")}
            ${this.big(icFreeze, html`틀${br}고정${caret}`, "w42")}
            <div class="smalls s1">
              <button>${icSplit}나누기</button><button>${icHide}숨기기</button>
              <button class="off" disabled>${icUnhide}숨기기 취소</button>
            </div>
            <div class="sep"></div>
            <div class="smalls s2">
              <button class="off" disabled>${icSide}나란히 보기</button>
              <button class="off" disabled>${icSync}동시 스크롤</button>
              <button class="off" disabled>${icReset}창 위치 다시 정렬</button>
            </div>
            <div class="sep"></div>
            ${this.big(icSaveWs, html`작업 영역${br}저장`, "w54")}
            ${this.big(icSwitch, html`창${br}전환${caret}`, "w44")}
          </div>
          <div class="glabel">창</div>
        </div>
        <div class="group">
          <div class="gbody">${this.big(icMacro, html`매크로${br}${caret}`, "w42")}</div>
          <div class="glabel">매크로</div>
        </div>
      </section>`;
  }

  private rowHeight(n: number) {
    if (n === 1) return "h26";
    if (n === 15) return "h25";
    if (n === 23) return "h15";
    if (n === 28) return "h22";
    return n >= 24 && n <= 27 ? "h17" : "h20";
  }

  /* Empty cells from column I to the right edge. */
  private tail(n: number) {
    return [..."IJKLMNOPQRST"].map((col) => {
      const first = col === "I";
      const cls = classMap({
        g: true,
        edge: first && n >= 2 && n <= 27,
        blk: first && n >= 22 && n <= 27,
        nob: first && n >= 3 && n <= 6,
        nor: first && n >= 4 && n <= 6,
        semi: col === "M" && n === 24,
      });
      return html`<td class=${cls}>${col === "M" && n === 24 ? ";" : nothing}</td>`;
    });
  }

  private cells(n: number) {
    if (n === 1) return html`<td class="ttl" colspan="8">주    간    식    단    표</td>`;
    if (n === 2)
      return html`<td class="c top bot day"></td>
        ${DAYS.map((d, i) => html`<td class="c top bot day ${i === 6 ? "red" : ""}">${d}</td>`)}`;
    const block = BLOCKS.find((b) => n >= b.first && n < b.first + b.rows.length);
    if (block) {
      const i = n - block.first;
      const last = i === block.rows.length - 1;
      return html`${i === 0 ? html`<td class="c top bot ${block.tint}" rowspan=${block.rows.length}>${block.label}</td>` : nothing}
      ${block.rows[i].map((t, c) => html`<td class=${classMap({
        c: true, top: i === 0, bot: last, green: n === 15,
        sm: SMALL.has(t), thin: n === 5 && c === 2, sel: n === 16 && c === 5,
      })}>${t}</td>`)}`;
    }
    if (n >= 22 && n <= 26) {
      const i = n - 22;
      return html`${i === 0 ? html`<td class="c blk top bot vert blue" rowspan="6">원 산 지 표 시</td>` : nothing}
      ${ORIGIN[i].map((t, c) => html`<td class=${classMap({
        c: true, blk: true, under1: true, top: i === 0, blue: i === 0, rose: i > 0 && c % 2 === 1,
        sm: i === 0 && c !== 1, left: i > 0 && c === 6,
      })}>${t}</td>`)}`;
    }
    if (n === 27)
      return html`<td class="c blk bot note olive" colspan="7">* 고혈압- 저염식     당뇨식- 잡곡밥 *         * 상기 식단은 시장수급사정에 따라 달라질수 있습니다.</td>`;
    return [..."ABCDEFGH"].map(() => html`<td class="g ${n === 28 ? "under" : ""}"></td>`);
  }

  private renderTable() {
    const rows = Array.from({ length: 32 }, (_, i) => i + 1);
    return html`<table>
      <colgroup>
        <col class="cr" /><col class="ca" />
        ${[1, 2, 3, 4, 5, 6, 7].map(() => html`<col class="cm" />`)}
        ${[..."IJKLMNOPQRST"].map(() => html`<col class="cx" />`)}
      </colgroup>
      <thead><tr>
        <th class="corner"><svg viewBox="0 0 22 14" width="22" height="14"><path d="M18 3V12H9Z" fill="#dfeaf8"></path></svg></th>
        ${COLS.map((c) => html`<th class=${c === "G" ? "on" : ""} scope="col">${c}</th>`)}<th></th>
      </tr></thead>
      <tbody>${rows.map((n) => html`<tr class=${this.rowHeight(n)}>
        <th class="n ${n === 16 ? "on" : ""}" scope="row">${n}</th>${this.cells(n)}${this.tail(n)}</tr>`)}
      </tbody>
    </table>`;
  }

  private renderBottom() {
    const names = ["6월1주", "6월2주", "6월3주", "6월4주", "6월5주"];
    const shape = (i: number) =>
      i === 0 ? "M3 0V13L5 14.500H60L71 0" : i === 3 ? "M2 0L6 14.500H60L71 0" : "M0 14.500L11 0H71L60 14.500Z";
    return html`
      <div class="bottom">
        <div class="nav">
          <button aria-label="첫 시트">${navIcon("M1 1H3V9H1ZM9 1V9L4 5Z")}</button>
          <button aria-label="이전 시트">${navIcon("M7 1V9L2 5Z")}</button>
          <button aria-label="다음 시트">${navIcon("M3 1V9L8 5Z")}</button>
          <button aria-label="마지막 시트">${navIcon("M7 1H9V9H7ZM1 1V9L6 5Z")}</button>
        </div>
        ${names.map((t, i) => html`<button class="stab">
          <svg viewBox="0 0 60 15" width="60" height="15"><path d=${shape(i)} fill=${i === 3 ? "#fff" : "#cfe0f7"} stroke="#6d8fc0"></path></svg>
          <span>${t}</span></button>`)}
        <button class="stab add" aria-label="워크시트 삽입">
          <svg viewBox="0 0 60 15" width="60" height="15"><path d="M0 14.500L11 0H45L34 14.500Z" fill="#cfe0f7" stroke="#6d8fc0"></path></svg>
          <svg class="pic" viewBox="0 0 16 14" width="16" height="14"><path d="M5.500 3.500H13.500V9L11 11.500H5.500Z" fill="#f2f5fb" stroke="#51607c"></path><path d="M4.500 0V8M.5 4H8.500M1.500 1L7.500 7M7.500 1L1.500 7" stroke="#e39a2d"></path></svg>
        </button>
        <div class="grow"></div>
        <div class="hwrap">
          <div class="hsplit"></div>
          <div class="harrow"><svg viewBox="0 0 5 9" width="5" height="9"><path d="M5 0V9L0 4.500Z" fill="#33486f"></path></svg></div>
          <div class="hthumb"><div class="hgrip"></div></div>
          <div class="hrest"></div>
          <div class="harrow"><svg viewBox="0 0 5 9" width="5" height="9"><path d="M0 0V9L5 4.500Z" fill="#33486f"></path></svg></div>
          <div class="hsplit"></div><div class="hend"></div>
        </div>
      </div>`;
  }

  private renderStatus() {
    const knob = (d: string) => html`<svg viewBox="0 0 16 16" width="16" height="16"><circle cx="8" cy="8" r="7.500" fill="#e6eefa" stroke="#54709c"></circle><path d=${d} stroke="#42557a" stroke-width="2"></path></svg>`;
    return html`
      <div class="status">
        <div class="ready">준비</div>
        <div class="grow"></div>
        <div class="sright">
          <div class="views">
            <button class="on" aria-label="기본"><svg viewBox="0 0 14 12" width="14" height="12"><path d="M.5.500H13.500V11.500H.5ZM.5 4.500H13.500M.5 8H13.500M4.500 0V12M9 0V12" fill="#fff" stroke="#6a6a6a"></path></svg></button>
            <button aria-label="페이지 레이아웃"><svg viewBox="0 0 14 12" width="14" height="12"><path d="M1 .500H13V11.500H1Z" fill="#b5bcc6" stroke="#6a6a6a"></path><path d="M4.500 2.500H9.500V9.500H4.500Z" fill="#fff" stroke="#555"></path><path d="M5.500 5H8.500M5.500 7H8.500" stroke="#777"></path></svg></button>
            <button aria-label="페이지 나누기"><svg viewBox="0 0 14 12" width="14" height="12"><path d="M1 .500H13V11.500H1Z" fill="#9aa0a8" stroke="#6a6a6a"></path><path d="M1.500 1H5.500V7H1.500ZM7 1H9V7H7Z" fill="#fff"></path></svg></button>
          </div>
          <div class="pct">75%</div>
          <button aria-label="축소">${knob("M4.500 8H11.500")}</button>
          <div class="zoomer"><input type="range" min="0" max="100" .value=${"36"} aria-label="확대/축소" /></div>
          <button aria-label="확대">${knob("M4.500 8H11.500M8 4.500V11.500")}</button>
        </div>
      </div>`;
  }

  render() {
    const tabs = ["홈", "삽입", "페이지 레이아웃", "수식", "데이터", "검토", "보기"];
    return html`
      <header class="title">
        <button class="orb" aria-label="Office">${officeOrb}</button>
        <div class="qat">
          <button aria-label="저장">${icSave}</button>
          <button class="u" aria-label="실행 취소">${icUndo}</button>${caret}
          <button aria-label="다시 실행">${icRedo}</button>${caretOff}
        </div>
        <button class="more" aria-label="빠른 실행"><svg viewBox="0 0 7 7" width="7" height="7"><path d="M1 .500H6" stroke="#15428b"></path><path d="M0 3H7L3.500 6.500Z" fill="#15428b"></path></svg></button>
        <div class="doc"><span>2017년 6월식단표</span> - Microsoft Excel</div>
        <div class="grow"></div>
        <div class="wbtns">
          <button aria-label="최소화">${icMin}</button><button aria-label="이전 크기">${icRestore}</button><button aria-label="닫기">${icClose}</button>
        </div>
      </header>
      <nav class="tabs">
        ${tabs.map((t, i) => html`<button class="tab ${i === 6 ? "on" : ""}">${t}</button>`)}
        <div class="grow"></div>
        <div class="mdi">
          <button aria-label="도움말">${icHelp}</button><button aria-label="창 최소화">${icMin}</button>
          <button aria-label="창 복원">${icRestore}</button><button aria-label="창 닫기">${icClose}</button>
        </div>
      </nav>
      ${this.renderRibbon()}
      <div class="fbar">
        <div class="name"><input aria-label="이름 상자" .value=${"G16"} /><svg viewBox="0 0 7 4" width="7" height="4"><path d="M0 0H7L3.500 4Z" fill="#000"></path></svg></div>
        <div class="fx"><i></i><button aria-label="함수 삽입">f<small>x</small></button></div>
        <input class="formula" aria-label="수식 입력줄" .value=${"보리밥/소고기죽"} />
        <button class="expand" aria-label="펼치기"><svg viewBox="0 0 7 9" width="7" height="9"><path d="M.5.500L3.500 3.500L6.500.500M.5 5L3.500 8L6.500 5" fill="none" stroke="#000" stroke-width="1.500"></path></svg></button>
      </div>
      <main class="sheetarea">
        <div class="sheet">${this.renderTable()}</div>
        <div class="vbar">
          <div class="vsplit"></div>
          <div class="arrow"><svg viewBox="0 0 9 5" width="9" height="5"><path d="M0 5H9L4.500 0Z" fill="#33486f"></path></svg></div>
          <div class="vthumb"><div class="grip"></div></div>
          <div class="vrest"></div>
          <div class="arrow"><svg viewBox="0 0 9 5" width="9" height="5"><path d="M0 0H9L4.500 5Z" fill="#33486f"></path></svg></div>
        </div>
      </main>
      ${this.renderBottom()} ${this.renderStatus()}
      <footer class="task">
        <button class="start" aria-label="시작">${winOrb}</button>
        <button class="tb run ie" aria-label="Internet Explorer">${ieIcon}</button><div class="stack"></div>
        <button class="tb run" aria-label="탐색기">${folderIcon}</button>
        <button class="tb" aria-label="Chrome">${chromeIcon}</button>
        <button class="tb run act" aria-label="Excel">${excelIcon}</button>
        <div class="grow"></div>
        <div class="tray">
          ${trayGlobe}<span class="ime">A</span><span class="han">漢</span>
          <svg viewBox="0 0 9 5" width="9" height="5"><path d="M0 5H9L4.500 0Z" fill="#fff"></path></svg>
          <span class="ic">&nbsp;</span>${trayFlag}<span class="ic"></span>${trayNet}<span class="ic"></span>${traySound}
          <div class="clock">오후 3:08<br />2017-07-10</div>
        </div>
        <button class="peek" aria-label="바탕 화면 보기"></button>
      </footer>`;
  }
}
